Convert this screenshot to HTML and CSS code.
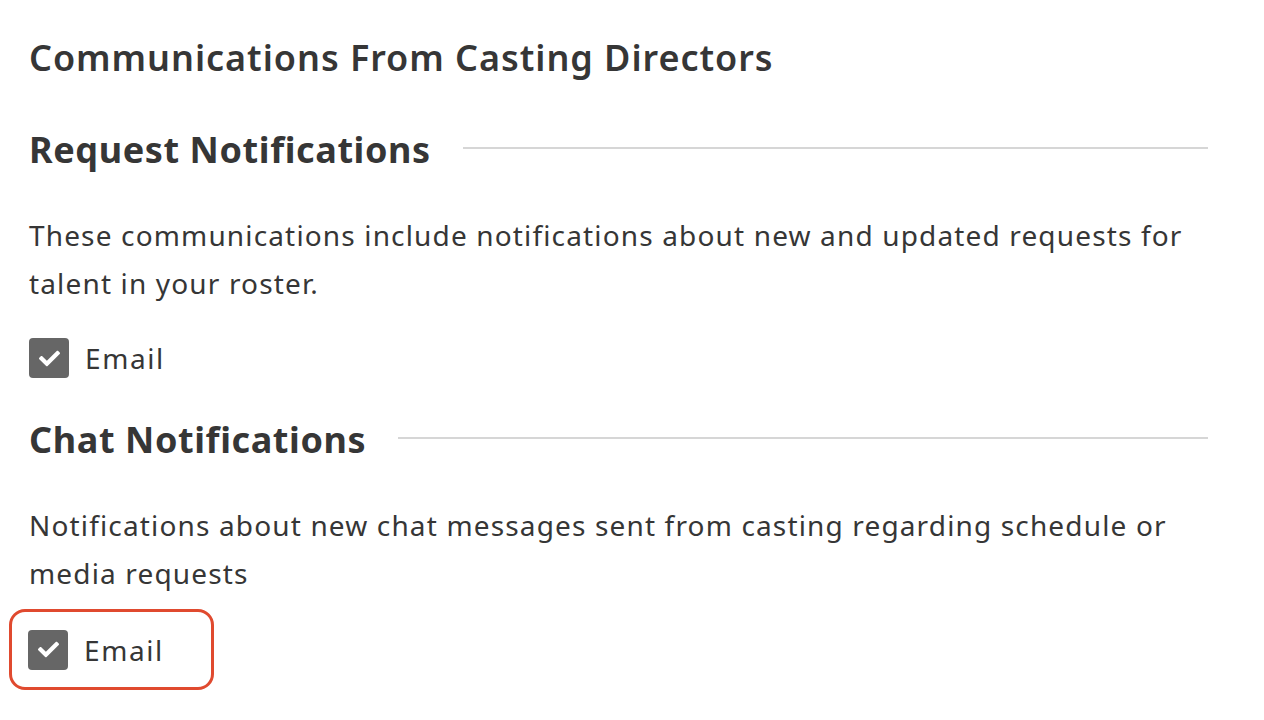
FILE: index.html
```html
<!DOCTYPE html>
<html>
<head>
<meta charset="utf-8">
<link rel="stylesheet" href="styles.css">
</head>
<body>
<main class="page">
  <h1 class="title">Communications From Casting Directors</h1>

  <section class="group">
    <div class="group-head">
      <h2 class="group-title">Request Notifications</h2>
      <div class="rule"></div>
    </div>
    <p class="desc">These communications include notifications about new and updated requests for talent in your roster.</p>
    <label class="check">
      <span class="box"><svg viewBox="0 0 512 512" width="21" height="21"><path fill="#fff" d="M173.898 439.404l-166.4-166.4c-9.997-9.997-9.997-26.206 0-36.204l36.203-36.204c9.997-9.998 26.207-9.998 36.204 0L192 312.69 432.095 72.596c9.997-9.997 26.207-9.997 36.204 0l36.203 36.204c9.997 9.997 9.997 26.206 0 36.204l-294.4 294.401c-9.998 9.997-26.207 9.997-36.204-.001z"/></svg></span>
      <span class="check-label">Email</span>
    </label>
  </section>

  <section class="group">
    <div class="group-head">
      <h2 class="group-title">Chat Notifications</h2>
      <div class="rule"></div>
    </div>
    <p class="desc">Notifications about new chat messages sent from casting regarding schedule or media requests</p>
    <div class="highlight">
      <label class="check">
        <span class="box"><svg viewBox="0 0 512 512" width="21" height="21"><path fill="#fff" d="M173.898 439.404l-166.4-166.4c-9.997-9.997-9.997-26.206 0-36.204l36.203-36.204c9.997-9.998 26.207-9.998 36.204 0L192 312.69 432.095 72.596c9.997-9.997 26.207-9.997 36.204 0l36.203 36.204c9.997 9.997 9.997 26.206 0 36.204l-294.4 294.401c-9.998 9.997-26.207 9.997-36.204-.001z"/></svg></span>
        <span class="check-label">Email</span>
      </label>
    </div>
  </section>
</main>
</body>
</html>
```

FILE: styles.css
```css
* { box-sizing: border-box; }
html, body { margin: 0; background: #fff; }
body {
  font-family: "Noto Sans", "Open Sans", sans-serif;
  color: #363636;
}
.page {
  width: 1264px;
  padding: 34px 56px 0 29px;
  display: flex;
  flex-direction: column;
}
.title {
  margin: 0;
  font-size: 36px;
  font-weight: 600;
  line-height: 48px;
  letter-spacing: 0.95px;
}
.group { display: flex; flex-direction: column; }
.group-head {
  display: flex;
  align-items: center;
  gap: 32px;
  margin-top: 44px;
}
.group + .group .group-head { margin-top: 38px; }
.group-title {
  margin: 0;
  font-size: 36px;
  font-weight: 700;
  line-height: 48px;
  letter-spacing: 0.6px;
  white-space: nowrap;
}
.rule {
  flex: 1;
  height: 2px;
  background: #d6d6d6;
  margin-bottom: 4px;
}
.desc {
  margin: 37px 0 0;
  font-size: 28px;
  line-height: 48px;
  font-weight: 400;
  letter-spacing: 1.15px;
}
.check {
  display: flex;
  align-items: center;
  gap: 16px;
  margin-top: 31px;
}
.box {
  width: 40px;
  height: 40px;
  border-radius: 4px;
  background: #666;
  display: flex;
  align-items: center;
  justify-content: center;
}
.check-label {
  font-size: 28px;
  line-height: 40px;
  letter-spacing: 1.6px;
}
.highlight {
  align-self: flex-start;
  margin: 12px 0 0 -20px;
  width: 205px;
  height: 81px;
  border: 3px solid #e04a2f;
  border-radius: 16px;
  padding: 0 0 0 16px;
  display: flex;
  align-items: center;
}
.highlight .check { margin-top: 0; }
```
